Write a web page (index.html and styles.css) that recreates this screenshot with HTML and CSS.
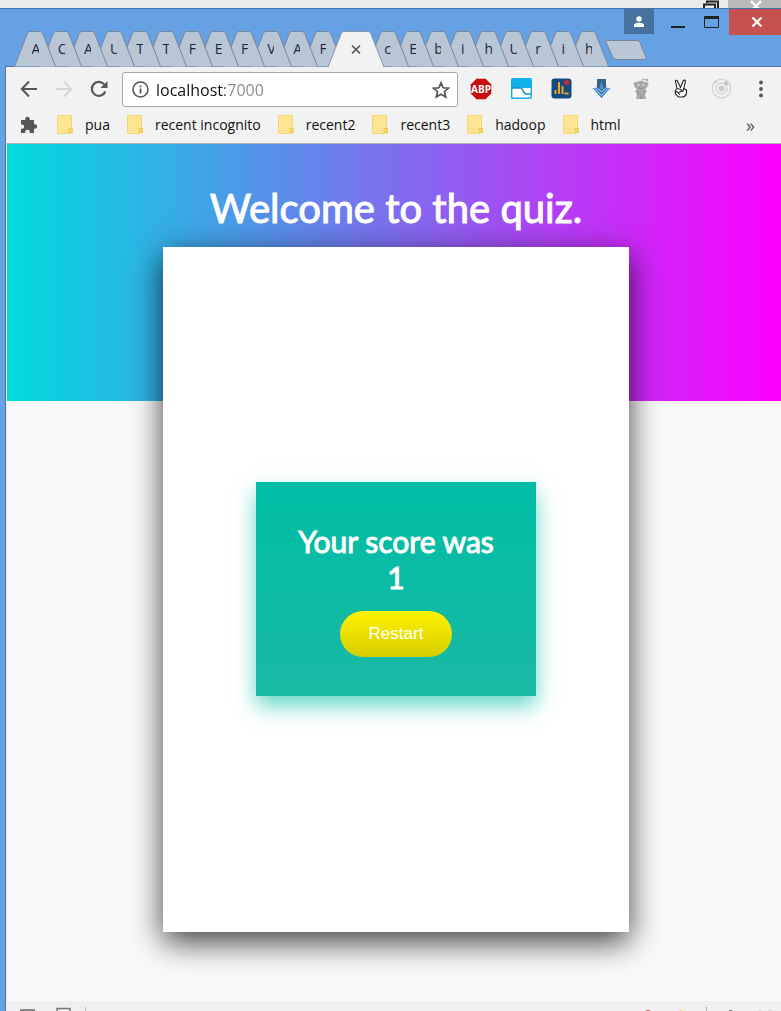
FILE: index.html
```html
<!DOCTYPE html>
<html lang="en">
<head>
<meta charset="utf-8">
<title>Quiz</title>
<link rel="stylesheet" href="styles.css">
</head>
<body>
<svg class="defs" aria-hidden="true">
  <symbol id="tab" viewBox="0 0 42 36"><path d="M0.5 35.5 13.500 2Q14.200.5 16 .5H26Q27.800.5 28.500 2L41.500 35.500" fill="#b9c6d5" stroke="#76879c"/></symbol>
  <symbol id="folder" viewBox="0 0 16 19"><path d="M.5.5h14v12.500h1v5h-3v.5H.5z" fill="#fde592" stroke="#f2d675"/><path d="M12 13.500h3v4h-3z" fill="#fbdc70" stroke="#ecc94f"/></symbol>
</svg>
<div class="behind">
  <svg class="behind-restore" width="16" height="8" viewBox="0 0 16 8"><path d="M4 3V1.500h11V8M1 8V4.500h11V8" fill="none" stroke="#222" stroke-width="2"/></svg>
  <div class="behind-close"><svg width="12" height="12" viewBox="0 0 12 12"><path d="M1 1l10 10M11 1 1 11" stroke="#fff" stroke-width="2.400"/></svg></div>
</div>
<div class="window">
  <header class="titlebar">
    <div class="controls">
      <button class="user" aria-label="Profile"><svg width="12" height="12" viewBox="0 0 12 12"><circle cx="6" cy="3" r="2.700" fill="#fff"/><path d="M1 11V9.300C1 7.500 4 6.800 6 6.800s5 .7 5 2.500V11z" fill="#fff"/></svg></button>
      <button class="minimize" aria-label="Minimize"><svg width="14" height="12" viewBox="0 0 14 12"><path d="M0 11h14" stroke="#222" stroke-width="2"/></svg></button>
      <button class="maximize" aria-label="Maximize"><svg width="15" height="12" viewBox="0 0 15 12"><path d="M.5 1v10.500h14V1" fill="none" stroke="#222"/><path d="M0 1.500h15" stroke="#222" stroke-width="3"/></svg></button>
      <button class="close" aria-label="Close"><svg width="12" height="10" viewBox="0 0 12 10"><path d="M1.500.5l9 9M10.500.5l-9 9" stroke="#fff" stroke-width="2.200"/></svg></button>
    </div>
    <nav class="tabs" aria-label="Tabs">
      <div class="group group-left">
        <button class="tab" style="z-index:12"><svg><use href="#tab"/></svg><span>A</span></button>
        <button class="tab" style="z-index:11"><svg><use href="#tab"/></svg><span>C</span></button>
        <button class="tab" style="z-index:10"><svg><use href="#tab"/></svg><span>A</span></button>
        <button class="tab" style="z-index:9"><svg><use href="#tab"/></svg><span>U</span></button>
        <button class="tab" style="z-index:8"><svg><use href="#tab"/></svg><span>T</span></button>
        <button class="tab" style="z-index:7"><svg><use href="#tab"/></svg><span>T</span></button>
        <button class="tab" style="z-index:6"><svg><use href="#tab"/></svg><span>F</span></button>
        <button class="tab" style="z-index:5"><svg><use href="#tab"/></svg><span>E</span></button>
        <button class="tab" style="z-index:4"><svg><use href="#tab"/></svg><span>F</span></button>
        <button class="tab" style="z-index:3"><svg><use href="#tab"/></svg><span>V</span></button>
        <button class="tab" style="z-index:2"><svg><use href="#tab"/></svg><span>A</span></button>
        <button class="tab" style="z-index:1"><svg><use href="#tab"/></svg><span>F</span></button>
      </div>
      <button class="tab-active" aria-label="Close tab"><svg width="56" height="37" viewBox="0 0 56 37"><path d="M0 36 13.500 2Q14.200.5 16 .5H40Q41.800.5 42.500 2L56 36V37H0z" fill="#f2f2f2"/><path d="M0 36 13.500 2Q14.200.5 16 .5H40Q41.800.5 42.500 2L56 36" fill="none" stroke="#8496ae"/><path d="M24 14.500l8 8M32 14.500l-8 8" stroke="#555" stroke-width="1.700"/></svg></button>
      <div class="group group-right">
        <button class="tab" style="z-index:9"><svg><use href="#tab"/></svg><span>c</span></button>
        <button class="tab" style="z-index:8"><svg><use href="#tab"/></svg><span>E</span></button>
        <button class="tab" style="z-index:7"><svg><use href="#tab"/></svg><span>b</span></button>
        <button class="tab" style="z-index:6"><svg><use href="#tab"/></svg><span>i</span></button>
        <button class="tab" style="z-index:5"><svg><use href="#tab"/></svg><span>h</span></button>
        <button class="tab" style="z-index:4"><svg><use href="#tab"/></svg><span>U</span></button>
        <button class="tab" style="z-index:3"><svg><use href="#tab"/></svg><span>r</span></button>
        <button class="tab" style="z-index:2"><svg><use href="#tab"/></svg><span>i</span></button>
        <button class="tab" style="z-index:1"><svg><use href="#tab"/></svg><span>h</span></button>
      </div>
      <button class="new-tab" aria-label="New tab"><svg width="42" height="20" viewBox="0 0 42 20"><path d="M2 .5H32Q34 .5 35 2.500L41 17.500Q41.500 19.500 40 19.500H11Q9 19.500 8 17.500L1 2Q.5.5 2 .5z" fill="#b9c6d5" stroke="#76879c"/></svg></button>
    </nav>
  </header>

  <div class="toolbar">
    <button class="nav" aria-label="Back"><svg width="18" height="18" viewBox="0 0 18 18"><path d="M17 9H2M9 1.500 1.800 9 9 16.500" fill="none" stroke="#555" stroke-width="2"/></svg></button>
    <button class="nav" aria-label="Forward"><svg width="18" height="18" viewBox="0 0 18 18"><path d="M1 9h15M9 1.500 16.200 9 9 16.500" fill="none" stroke="#d4d4d4" stroke-width="2"/></svg></button>
    <button class="nav" aria-label="Reload"><svg width="18" height="18" viewBox="0 0 18 18"><path d="M15.300 11.500A7 7 0 1 1 14 4.200" fill="none" stroke="#555" stroke-width="2.200"/><path d="M17.500 1v7h-7z" fill="#555"/></svg></button>
    <div class="omnibox">
      <svg width="17" height="17" viewBox="0 0 17 17"><circle cx="8.500" cy="8.500" r="7.500" fill="none" stroke="#555" stroke-width="1.600"/><path d="M8.500 7.500v5M8.500 4.500v1.800" stroke="#555" stroke-width="1.800"/></svg>
      <input class="url" type="text" aria-label="Address" value="localhost:7000">
      <button class="star" aria-label="Bookmark this page"><svg width="18" height="18" viewBox="0 0 18 18"><path d="M9 1.800l2.100 5 5.400.4-4.100 3.500 1.300 5.300L9 13.200 4.300 16l1.300-5.300L1.500 7.200l5.400-.4z" fill="none" stroke="#555" stroke-width="1.700"/></svg></button>
    </div>
    <button class="ext" aria-label="Adblock Plus"><svg width="22" height="22" viewBox="0 0 22 22"><path d="M6.500.5h9l6 6v9l-6 6h-9l-6-6v-9z" fill="#c70d0d" stroke="#e8d8d8" stroke-width=".6"/><text x="11" y="14.500" class="abp">ABP</text></svg></button>
    <button class="ext" aria-label="Panel"><svg width="21" height="21" viewBox="0 0 21 21"><rect x=".7" y=".7" width="19.600" height="19.600" rx="1" fill="#fff" stroke="#10aeea" stroke-width="1.400"/><path d="M1 1h19v9H1z" fill="#12b0ec"/><path d="M1 10h9c2 0 2 6 5 6h5" fill="none" stroke="#1b8fbd" stroke-width="1.500"/></svg></button>
    <button class="ext" aria-label="Statistics"><svg width="21" height="21" viewBox="0 0 21 21"><rect x=".5" y=".5" width="20" height="20" rx="3" fill="#154a80"/><path d="M4.500 16v-4M8 16V4M11.500 16V8M13.500 15.500h4" stroke="#f0a623" stroke-width="2"/><circle cx="15.800" cy="4.500" r="2.500" fill="#d62839"/></svg></button>
    <button class="ext" aria-label="Download"><svg width="19" height="21" viewBox="0 0 19 21"><path d="M5 1h9v9h4.500L9.500 20 .5 10H5z" fill="#2f78bd"/><path d="M5.500 1h8l1 10-5 5-5-5z" fill="#386386"/><path d="M2 10l7.500 7.500L17 10M5 10l4.500 4L14 10" fill="none" stroke="#83bff0" stroke-width="1.200"/><path d="M9.500 3l2 7-2 2-2-2z" fill="#4c91cb"/></svg></button>
    <button class="ext" aria-label="Reddit"><svg width="17" height="22" viewBox="0 0 17 22"><path d="M8 4.500 9.500 1l4 1" fill="none" stroke="#aaa"/><circle cx="14" cy="2" r="1.300" fill="#aaa"/><circle cx="2.500" cy="6" r="2" fill="#aaa"/><circle cx="13.500" cy="6" r="2" fill="#aaa"/><ellipse cx="8" cy="7.500" rx="6.500" ry="4.500" fill="#a6a6a6"/><path d="M4 11h8l2 2-2 3 1 5H3l1-5-2-3z" fill="#a9a9a9"/><circle cx="5.500" cy="7" r="1.300" fill="#ccc"/><circle cx="10.500" cy="7" r="1.300" fill="#ccc"/><path d="M5 9.700q3 1.500 6 0M8 17v4M5 13v4M11 13v4" fill="none" stroke="#8a8a8a" stroke-width=".8"/></svg></button>
    <button class="ext" aria-label="Victory"><svg width="14" height="19" viewBox="0 0 14 19"><path d="M3 9.500 1.500 2.500Q1.500 1 3 1.200L6.500 8.500 9.300 1.500Q11.200.5 11.500 2L9.800 9.500 12.500 11V14.500Q11.500 18 7.500 18H5Q1 16 1.200 11.500L3 9.500 7 10.500 7.500 12.500 4 13.500 6 16M9.800 9.500 8.500 13M1.500 12l2.500 1.500" fill="#fff" stroke="#222" stroke-width="1.100" stroke-linejoin="round"/></svg></button>
    <button class="ext" aria-label="Orbit"><svg width="21" height="21" viewBox="0 0 21 21"><g fill="none" stroke="#d2d2d2" stroke-width="1.300"><circle cx="10.500" cy="10.500" r="9.300"/><circle cx="10.500" cy="10.500" r="5.500"/></g><circle cx="10.500" cy="10.500" r="3" fill="#ccc"/><circle cx="15" cy="5.500" r="2" fill="#c4c4c4"/><circle cx="4.500" cy="4" r="1.300" fill="#c4c4c4"/></svg></button>
    <button class="ext" aria-label="Menu"><svg width="4" height="18" viewBox="0 0 4 18"><g fill="#555"><circle cx="2" cy="2.500" r="1.900"/><circle cx="2" cy="9" r="1.900"/><circle cx="2" cy="15.500" r="1.900"/></g></svg></button>
  </div>

  <nav class="bookmarks" aria-label="Bookmarks">
    <button class="apps" aria-label="Extensions"><svg width="18" height="18" viewBox="0 0 18 18"><path d="M1 4h4.300V3a2.200 2.200 0 0 1 4.400 0v1H14v4.300h1a2.200 2.200 0 0 1 0 4.400h-1V17H9.800v-1a2.300 2.300 0 0 0-4.600 0v1H1v-4.200h1a2.200 2.200 0 0 0 0-4.400H1z" fill="#555"/></svg></button>
    <a href="#"><svg class="folder"><use href="#folder"/></svg>pua</a>
    <a href="#"><svg class="folder"><use href="#folder"/></svg>recent incognito</a>
    <a href="#"><svg class="folder"><use href="#folder"/></svg>recent2</a>
    <a href="#"><svg class="folder"><use href="#folder"/></svg>recent3</a>
    <a href="#"><svg class="folder"><use href="#folder"/></svg>hadoop</a>
    <a href="#"><svg class="folder"><use href="#folder"/></svg>html</a>
    <button class="more" aria-label="More bookmarks">»</button>
  </nav>

  <main class="page">
    <h1>Welcome to the quiz.</h1>
    <section class="quiz">
      <div class="score">
        <h2>Your score was<br>1</h2>
        <button class="restart">Restart</button>
      </div>
    </section>
  </main>

  <footer class="downloads">
    <svg width="70" height="10" viewBox="0 0 70 10"><path d="M0 9h15" stroke="#888" stroke-width="2"/><path d="M37 10V7.500h13V10" fill="none" stroke="#777" stroke-width="1.500"/><path d="M65.500 6v4" stroke="#bbb"/></svg>
    <svg width="140" height="10" viewBox="0 0 140 10"><circle cx="7" cy="14" r="5" fill="#d9503f"/><path d="M38 10l2-1 2 1z" fill="#e9cf45"/><path d="M65.500 6v4" stroke="#aaa"/><path d="M88 9.500h3" stroke="#777"/><path d="M117 9.500h4M127 9.500h4" stroke="#ddd"/></svg>
  </footer>
</div>
</body>
</html>
```
FILE: styles.css
```css
* { box-sizing: border-box; }

html { height: 100%; }

body {
  margin: 0;
  min-height: 100%;
  display: flex;
  flex-direction: column;
  background: #ebebea;
  font-family: "Open Sans", "Noto Sans", sans-serif;
}

button {
  margin: 0;
  padding: 0;
  border: 0;
  background: none;
  font: inherit;
  color: inherit;
}

svg { display: block; flex: none; }

.defs { position: absolute; width: 0; height: 0; }

.behind {
  height: 8px;
  display: flex;
  justify-content: flex-end;
  gap: 9px;
  overflow: hidden;
}

.behind-close {
  width: 53px;
  height: 8px;
  padding-left: 22px;
  background: #b9b9b9;
}

.window {
  flex: 1;
  display: flex;
  flex-direction: column;
  background: #66a1e3;
  border-top: 1px solid #4272ae;
  padding-left: 5px;
}

.titlebar { display: flex; flex-direction: column; }

.controls {
  height: 22px;
  display: flex;
  justify-content: flex-end;
  align-items: flex-start;
}

.controls button {
  height: 25px;
  flex: none;
  display: flex;
  align-items: center;
  justify-content: center;
}

.controls .user { width: 30px; background: #4672a0; }
.controls .minimize { width: 48px; }
.controls .maximize { width: 18px; }
.controls .close { width: 52px; height: 26px; margin-left: 9px; padding-left: 4px; background: #c75050; }

.tabs {
  display: flex;
  align-items: flex-start;
  height: 36px;
  padding-left: 17px;
  border-bottom: 1px solid #4f77a6;
}

.group { display: flex; isolation: isolate; }
.group-left { width: 314px; }
.group-right { width: 226px; }

.tab {
  position: relative;
  flex: 1;
  min-width: 0;
  height: 36px;
  display: grid;
  justify-content: center;
  font-size: 14px;
  line-height: 36px;
  color: #1d2740;
}

.tab svg { grid-area: 1 / 1; width: 42px; height: 36px; }

.tab span {
  grid-area: 1 / 1;
  justify-self: center;
  width: 7px;
  overflow: hidden;
}

.tab-active { position: relative; z-index: 20; margin: 0 -9px 0 -8px; }
.new-tab { margin: 9px 0 0 4px; }

.toolbar {
  display: flex;
  align-items: center;
  height: 43px;
  padding: 0 0 0 5px;
  background: #f2f2f2;
  border-left: 1px solid #4f77a6;
}

.nav, .ext {
  flex: none;
  height: 35px;
  display: flex;
  align-items: center;
  justify-content: center;
}

.nav { width: 35px; }
.ext { width: 40px; }

.abp {
  font: bold 10px "Open Sans", sans-serif;
  fill: #fff;
  text-anchor: middle;
}

.omnibox {
  flex: 1;
  min-width: 0;
  height: 35px;
  margin: 2px 3px 0 6px;
  padding: 0 7px 0 9px;
  display: flex;
  align-items: center;
  gap: 7px;
  background: #fff;
  border: 1px solid #a8a8a8;
  border-radius: 3px;
}

.url {
  flex: 1;
  min-width: 0;
  padding: 0;
  border: 0;
  outline: 0;
  font: 16px/24px "Open Sans", "Noto Sans", sans-serif;
  color: transparent;
  background: linear-gradient(90deg, #111 69px, #888 69px);
  -webkit-background-clip: text;
  background-clip: text;
}

.bookmarks {
  display: flex;
  align-items: center;
  gap: 17px;
  height: 34px;
  padding: 0 26px 4px 14px;
  background: #f2f2f2;
  border-left: 1px solid #4f77a6;
  border-bottom: 1px solid #b9b3bb;
  font-size: 14px;
  line-height: 20px;
  white-space: nowrap;
}

.apps { margin-right: 2px; }

.bookmarks a {
  display: flex;
  align-items: center;
  gap: 12px;
  color: #111;
  text-decoration: none;
}

.folder { width: 16px; height: 19px; }
.more { margin-left: auto; font-size: 18px; color: #555; }

.page {
  flex: 1;
  display: flex;
  flex-direction: column;
  align-items: center;
  padding: 39px 0 69px 5px;
  border-left: 1px solid #4f77a6;
  background: #fafafa linear-gradient(90deg, #00dbde, #fc00ff) no-repeat 0 0 / 100% 257px;
  box-shadow: inset 1px 0 #e8eaee;
  font-family: Lato, sans-serif;
  color: #fff;
}

h1, h2 {
  margin: 0;
  font-weight: 400;
  text-align: center;
  -webkit-text-stroke: 1px #fff;
}

h1 { height: 64px; font-size: 40px; line-height: 50px; }

.quiz {
  flex: 1;
  width: 60.5%;
  padding-bottom: 2px;
  display: grid;
  align-items: center;
  justify-items: center;
  background: #fff;
  box-shadow: 0 10px 30px rgba(0, 0, 0, 0.75);
}

.score {
  width: 60%;
  padding: 41px 20px 39px;
  display: flex;
  flex-direction: column;
  align-items: center;
  gap: 16px;
  background: linear-gradient(#00bda5, #19b9a5);
  box-shadow: 0 10px 20px rgba(0, 189, 165, 0.6);
}

h2 { font-size: 30px; line-height: 36px; }

.restart {
  height: 46px;
  padding: 0 29px;
  border-radius: 23px;
  background: linear-gradient(#fff200, #d6cd00);
  font: 17px/20px "Liberation Sans", Arial, sans-serif;
  color: #fff;
}

.downloads {
  height: 10px;
  display: flex;
  justify-content: space-between;
  padding-left: 14px;
  overflow: hidden;
  background: #f0f0f0;
  border-left: 1px solid #4f77a6;
}
```
